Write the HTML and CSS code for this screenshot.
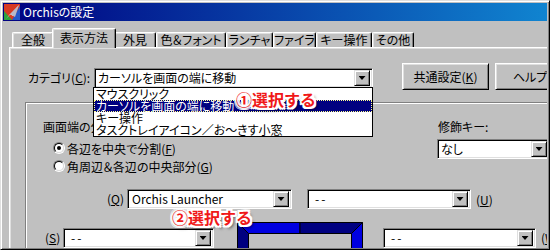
FILE: index.html
```html
<!DOCTYPE html>
<html lang="ja">
<head>
<meta charset="utf-8">
<title>Orchisの設定</title>
<link rel="stylesheet" href="styles.css">
</head>
<body>
<div class="stage">
  <div class="window">
    <div class="titlebar">
      <svg class="app-icon" viewBox="0 0 16 16" width="16" height="16">
        <rect x="0" y="0" width="16" height="16" fill="#d83a22"/>
        <polygon points="0,16 0,7 8,16" fill="#2ea43c"/>
        <polygon points="16,2 16,16 8,16" fill="#2456c8"/>
        <polygon points="2,15 15,1 9,12 6,10" fill="#f4f4f4"/>
        <polygon points="6,10 15,1 11,13" fill="#b8b8c8"/>
      </svg>
      <span class="title-text">Orchisの設定</span>
    </div>
    <div class="client">
      <div class="tabs">
        <div class="tab tab-w42">全般</div>
        <div class="tab tab-active">表示方法</div>
        <div class="tab tab-w42 tab-after">外見</div>
        <div class="tab tab-w70">色＆フォント</div>
        <div class="tab tab-w47">ランチャ</div>
        <div class="tab tab-w43">ファイラ</div>
        <div class="tab tab-w56">キー操作</div>
        <div class="tab tab-w42">その他</div>
      </div>
      <div class="panel">
        <div class="row-category">
          <span class="label cat-label">カテゴリ(<u>C</u>):</span>
          <div class="combo combo-cat"><span class="combo-text">カーソルを画面の端に移動</span><span class="drop"></span></div>
          <div class="btn btn-common">共通設定(<u>K</u>)</div>
          <div class="btn btn-help">ヘルプ(<u>H</u>)</div>
        </div>
        <div class="group">
          <div class="group-top">
            <div class="col-left">
              <div class="label line14">画面端の分割方法:</div>
              <div class="radio-row first"><span class="radio checked"><span class="radio-in"></span></span><span class="radio-text">各辺を中央で分割(<u>F</u>)</span></div>
              <div class="radio-row"><span class="radio"><span class="radio-in"></span></span><span class="radio-text">角周辺＆各辺の中央部分(<u>G</u>)</span></div>
            </div>
            <div class="col-right">
              <div class="label line14 mod-label">修飾キー:</div>
              <div class="combo combo-mod"><span class="combo-text">なし</span><span class="drop"></span></div>
            </div>
          </div>
          <div class="row-q">
            <span class="label key-q">(<u>Q</u>)</span>
            <div class="combo combo-q"><span class="combo-text pad3">Orchis Launcher</span><span class="drop"></span></div>
            <div class="combo combo-u"><span class="combo-text dash">--</span><span class="drop"></span></div>
            <span class="label key-u">(<u>U</u>)</span>
          </div>
          <div class="row-s">
            <span class="label key-s">(<u>S</u>)</span>
            <div class="combo combo-s"><span class="combo-text dash">--</span><span class="drop"></span></div>
            <svg class="edge-map" width="126" height="40" viewBox="0 0 126 40">
              <polygon points="0.5,0.5 63,0.5 63,11.5 11.5,11.5" fill="#0000e0" stroke="#000" stroke-width="1"/>
              <polygon points="63,0.5 125.5,0.5 114.5,11.5 63,11.5" fill="#000080" stroke="#000" stroke-width="1"/>
              <polygon points="125.5,0.5 125.5,40 114.5,40 114.5,11.5" fill="#0000e0" stroke="#000" stroke-width="1"/>
              <polygon points="0.5,0.5 11.5,11.5 11.5,40 0.5,40" fill="#000080" stroke="#000" stroke-width="1"/>
            </svg>
            <div class="combo combo-w"><span class="combo-text dash">--</span><span class="drop"></span></div>
            <span class="label key-w">(<u>W</u>)</span>
          </div>
        </div>
      </div>
    </div>
  </div>

  <div class="dropdown-list">
    <div class="list-item">マウスクリック</div>
    <div class="list-item selected">カーソルを画面の端に移動</div>
    <div class="list-item">キー操作</div>
    <div class="list-item">タスクトレイアイコン／お～きす小窓</div>
  </div>
  <div class="note note1">①選択する</div>
  <div class="note note2">②選択する</div>
</div>
</body>
</html>
```

FILE: styles.css
```css
* { box-sizing: border-box; }
html, body { margin: 0; padding: 0; }
body {
  width: 550px;
  height: 250px;
  overflow: hidden;
  background: #c0c0c0;
  font-family: "Noto Sans CJK JP", "Noto Sans", sans-serif;
  font-size: 12px;
  color: #000;
  font-feature-settings: "palt";
}
u { text-decoration: underline; text-underline-offset: 1px; }

.stage { position: relative; width: 550px; height: 250px; overflow: hidden; }

.window {
  width: 550px;
  height: 250px;
  background: #c0c0c0;
  border: 1px solid;
  border-color: #dfdfdf #000 #000 #dfdfdf;
  box-shadow: inset 1px 1px #fff, inset -1px -1px #808080;
  padding: 2px 2px 1px 2px;
}

.titlebar {
  height: 18px;
  background: linear-gradient(to right, #000080, #1084d0);
  display: flex;
  align-items: center;
  color: #fff;
  padding-left: 1px;
}
.app-icon { width: 16px; height: 16px; flex: none; }
.title-text { margin-left: 3px; line-height: 16px; white-space: nowrap; }

.client { height: 227px; overflow: hidden; padding: 7px 0 0 6px; }

.tabs {
  display: flex;
  align-items: flex-end;
  height: 20px;
  margin-left: 3px;
  position: relative;
  z-index: 1;
}
.tab {
  flex: none;
  height: 15px;
  margin-bottom: 1px;
  line-height: 14px;
  text-align: center;
  white-space: nowrap;
  background: #c0c0c0;
  border-top: 1px solid #fff;
  border-left: 1px solid #fff;
  border-right: 1px solid #000;
  box-shadow: inset -1px 0 #808080, inset 1px 1px #dfdfdf;
  border-radius: 2px 2px 0 0;
}
.tab-w42 { width: 42px; }
.tab-w43 { width: 43px; }
.tab-w47 { width: 47px; }
.tab-w56 { width: 56px; }
.tab-w70 { width: 70px; }
.tab-active {
  width: 64px;
  height: 20px;
  margin: 0 -2px;
  line-height: 17px;
  position: relative;
  z-index: 2;
  box-shadow: inset -1px 0 #808080, inset 1px 1px #dfdfdf;
}

.panel {
  margin-top: -1px;
  width: 560px;
  height: 220px;
  border-top: 1px solid #fff;
  border-left: 1px solid #fff;
  box-shadow: inset 1px 1px #dfdfdf;
}

.label { white-space: nowrap; flex: none; }
.line14 { line-height: 14px; }

.row-category {
  display: flex;
  align-items: flex-start;
  margin: 15px 0 0 18px;
}
.cat-label { width: 66px; line-height: 20px; margin-top: 5px; }

.combo {
  display: flex;
  align-items: center;
  flex: none;
  height: 20px;
  background: #fff;
  border: 1px solid;
  border-color: #808080 #fff #fff #808080;
  box-shadow: inset 1px 1px #000, inset -1px -1px #dfdfdf;
  padding: 2px;
}
.combo-text {
  flex: 1;
  min-width: 0;
  padding-left: 1px;
  line-height: 16px;
  white-space: nowrap;
  overflow: hidden;
}
.combo-text.pad3 { padding-left: 2px; }
.combo-text.dash { padding-left: 5px; letter-spacing: 2px; }
.drop {
  flex: none;
  width: 16px;
  height: 16px;
  background: #c0c0c0;
  border: 1px solid;
  border-color: #dfdfdf #000 #000 #dfdfdf;
  box-shadow: inset 1px 1px #fff, inset -1px -1px #808080;
  display: flex;
  align-items: center;
  justify-content: center;
}
.drop::before {
  content: "";
  width: 7px;
  height: 4px;
  background: #000;
  clip-path: polygon(0 0, 100% 0, 50% 100%);
}

.combo-cat { width: 279px; margin-top: 5px; }

.btn {
  flex: none;
  width: 87px;
  height: 27px;
  border: 1px solid;
  border-color: #fff #000 #000 #fff;
  box-shadow: inset 1px 1px #dfdfdf, inset -1px -1px #808080;
  display: flex;
  align-items: center;
  justify-content: center;
  white-space: nowrap;
}
.btn-common { margin-left: 29px; }
.btn-help { margin-left: 6px; }

.group {
  margin: 12px 0 0 15px;
  width: 560px;
  height: 200px;
  border-top: 1px solid #808080;
  border-left: 1px solid #808080;
  box-shadow: inset 1px 1px #fff;
  padding-top: 17px;
}
.group-top { display: flex; align-items: flex-start; }
.col-left { width: 411px; padding-left: 17px; flex: none; }
.col-right { flex: none; }
.mod-label { padding-left: 1px; }

.radio-row {
  display: flex;
  align-items: center;
  height: 18px;
  padding-left: 10px;
}
.radio-row.first { margin-top: 5px; }
.radio-text { margin-left: 2px; white-space: nowrap; }
.radio {
  flex: none;
  width: 12px;
  height: 12px;
  border-radius: 50%;
  border: 1px solid;
  border-color: #808080 #fff #fff #808080;
}
.radio-in {
  display: block;
  position: relative;
  width: 10px;
  height: 10px;
  border-radius: 50%;
  border: 1px solid;
  border-color: #000 #dfdfdf #dfdfdf #000;
  background: #fff;
}
.radio.checked .radio-in::after {
  content: "";
  position: absolute;
  left: 2px;
  top: 2px;
  width: 4px;
  height: 4px;
  border-radius: 50%;
  background: #000;
}
.combo-mod { width: 113px; margin-top: 5px; }

.row-q {
  display: flex;
  align-items: center;
  height: 20px;
  margin: 14px 0 0 81px;
}
.key-q { width: 20px; line-height: 20px; }
.combo-q { width: 165px; }
.combo-u { width: 164px; margin-left: 15px; }
.key-u { margin-left: 5px; }

.row-s {
  display: flex;
  align-items: flex-start;
  margin: 13px 0 0 19px;
}
.key-s { width: 18px; line-height: 20px; margin-top: 6px; }
.combo-s { width: 151px; margin-top: 6px; }
.edge-map { flex: none; display: block; margin-left: 23px; }
.combo-w { width: 153px; margin-top: 6px; margin-left: 20px; }
.key-w { margin-left: 5px; margin-top: 6px; line-height: 20px; }

.dropdown-list {
  position: absolute;
  left: 93px;
  top: 87px;
  width: 280px;
  height: 50px;
  background: #fff;
  border: 1px solid #000;
}
.list-item {
  height: 12px;
  line-height: 12px;
  padding-left: 2px;
  white-space: nowrap;
  overflow: hidden;
}
.list-item.selected {
  background: #000080;
  color: #fff;
  outline: 1px dotted #ffff90;
  outline-offset: -1px;
}

.note {
  position: absolute;
  font-size: 16px;
  font-weight: 700;
  line-height: 18px;
  color: #f01818;
  white-space: nowrap;
  font-feature-settings: normal;
  text-shadow:
    -1px -1px 0 #fff, 1px -1px 0 #fff, -1px 1px 0 #fff, 1px 1px 0 #fff,
    0 -2px 0 #fff, 0 2px 0 #fff, -2px 0 0 #fff, 2px 0 0 #fff,
    2px 2px 0 #fff, -2px -2px 0 #fff, 2px -2px 0 #fff, -2px 2px 0 #fff,
    3px 3px 3px rgba(0, 0, 0, 0.55);
}
.note1 { left: 236px; top: 90px; }
.note2 { left: 172px; top: 208px; }
```
